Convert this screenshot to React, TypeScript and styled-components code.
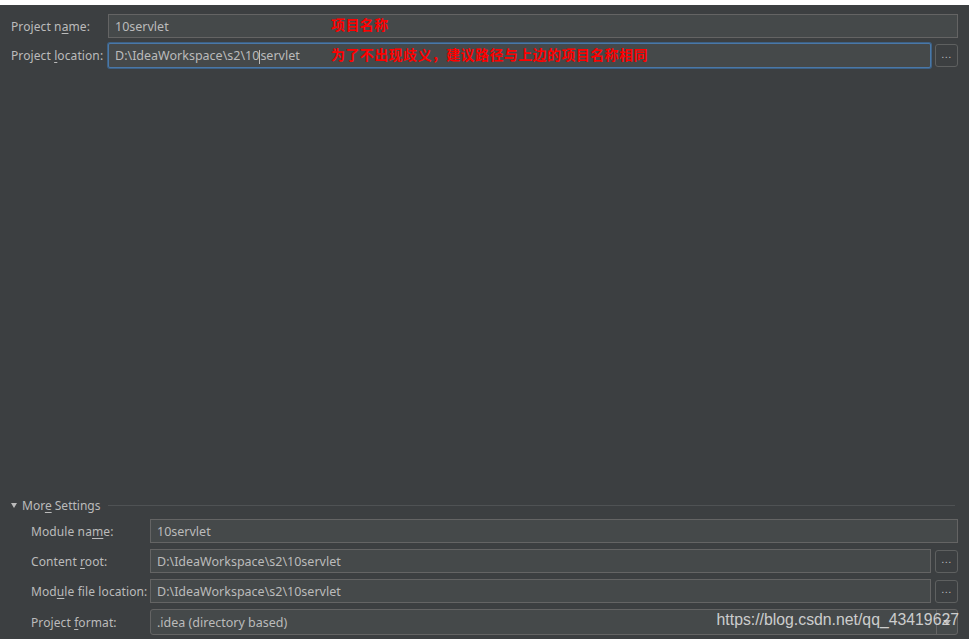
import React from "react";
import styled, { createGlobalStyle } from "styled-components";

const Global = createGlobalStyle`
  html, body { margin: 0; padding: 0; background: #ffffff; }
  body { font-family: "Noto Sans", "Open Sans", "Liberation Sans", sans-serif; }
`;

const Page = styled.div`
  width: 969px;
  height: 639px;
  padding-top: 5px;
  box-sizing: border-box;
  background: #ffffff;
`;

const Panel = styled.div`
  position: relative;
  height: 634px;
  background: #3c3f41;
  display: flex;
  flex-direction: column;
  color: #bbbbbb;
  font-size: 12px;
`;

const TopForm = styled.div`
  padding: 9px 11px 0 11px;
  display: flex;
  flex-direction: column;
  gap: 5px;
`;

const Row = styled.div<{ $labelWidth: number; $height?: number }>`
  display: grid;
  grid-template-columns: ${(p) => p.$labelWidth}px 1fr auto;
  align-items: center;
  height: ${(p) => p.$height ?? 24}px;
`;

const Label = styled.label`
  white-space: nowrap;
  color: #bbbbbb;
  font-size: 12px;
  letter-spacing: 0.1px;
  u { text-decoration-thickness: 1px; text-underline-offset: 2px; }
`;

const Field = styled.div<{ $focused?: boolean; $span?: boolean }>`
  position: relative;
  height: 100%;
  box-sizing: border-box;
  background: #45494a;
  border: 1px solid ${(p) => (p.$focused ? "#4a78a8" : "#646464")};
  box-shadow: ${(p) => (p.$focused ? "0 0 0 1px #3d6185" : "none")};
  border-radius: ${(p) => (p.$focused ? "2px" : "0")};
  display: flex;
  align-items: center;
  padding-left: 6px;
  color: #bbbbbb;
  font-size: 12.5px;
  grid-column: ${(p) => (p.$span ? "2 / 4" : "auto")};
`;

const Caret = styled.span`
  display: inline-block;
  width: 1px;
  height: 14px;
  background: #bbbbbb;
  vertical-align: middle;
`;

const Note = styled.span<{ $left: number }>`
  position: absolute;
  left: ${(p) => p.$left}px;
  top: 50%;
  transform: translateY(-62%);
  color: #ff0000;
  font-family: "Noto Sans CJK SC", sans-serif;
  font-weight: 700;
  font-size: 14px;
  letter-spacing: 0.4px;
  white-space: nowrap;
`;

const Browse = styled.button`
  width: 23px;
  height: 23px;
  margin-left: 4px;
  box-sizing: border-box;
  border: 1px solid #5e6060;
  border-radius: 3px;
  background: #3c3f41;
  color: #bbbbbb;
  font-size: 11px;
  padding: 0 0 4px 0;
  display: flex;
  align-items: center;
  justify-content: center;
  letter-spacing: 0.5px;
`;

const Spacer = styled.div`
  flex: 1;
`;

const Section = styled.div`
  padding: 0 11px 4px 11px;
  display: flex;
  flex-direction: column;
`;

const SectionHead = styled.div`
  display: flex;
  align-items: center;
  height: 14px;
  margin-bottom: 7px;
  font-size: 12px;
  color: #bbbbbb;
  white-space: pre;
  u { text-decoration-thickness: 1px; text-underline-offset: 2px; }
`;

const Arrow = styled.span`
  width: 0;
  height: 0;
  border-left: 3.5px solid transparent;
  border-right: 3.5px solid transparent;
  border-top: 5px solid #bbbbbb;
  margin-right: 5px;
`;

const Rule = styled.div`
  flex: 1;
  height: 1px;
  background: #4f5254;
  margin-left: 8px;
  margin-right: 3px;
`;

const SubForm = styled.div`
  padding-left: 20px;
  display: flex;
  flex-direction: column;
  gap: 6px;
`;

const Combo = styled(Field)`
  border-radius: 3px;
  padding-right: 0;
`;

const ComboArrow = styled.div`
  margin-left: auto;
  width: 20px;
  height: 100%;
  border-left: 1px solid #646464;
  display: flex;
  align-items: center;
  justify-content: center;
`;

const Watermark = styled.div`
  position: absolute;
  right: 10px;
  bottom: 10px;
  font-family: "Liberation Sans", Arial, sans-serif;
  font-size: 15.8px;
  color: rgba(230, 230, 230, 0.85);
  pointer-events: none;
`;

export default function App() {
  return (
    <Page>
      <Global />
      <Panel>
        <TopForm>
          <Row $labelWidth={97}>
            <Label>Project n<u>a</u>me:</Label>
            <Field $span>
              10servlet
              <Note $left={222}>项目名称</Note>
            </Field>
          </Row>
          <Row $labelWidth={97} $height={25}>
            <Label>Project <u>l</u>ocation:</Label>
            <Field $focused>
              <span>
                D:\IdeaWorkspace\s2\10<Caret />servlet
              </span>
              <Note $left={222}>为了不出现歧义，建议路径与上边的项目名称相同</Note>
            </Field>
            <Browse>...</Browse>
          </Row>
        </TopForm>
        <Spacer />
        <Section>
          <SectionHead>
            <Arrow />
            <span>
              Mor<u>e</u> Settings
            </span>
            <Rule />
          </SectionHead>
          <SubForm>
            <Row $labelWidth={119}>
              <Label>Module na<u>m</u>e:</Label>
              <Field $span>10servlet</Field>
            </Row>
            <Row $labelWidth={119}>
              <Label>Content <u>r</u>oot:</Label>
              <Field>D:\IdeaWorkspace\s2\10servlet</Field>
              <Browse>...</Browse>
            </Row>
            <Row $labelWidth={119}>
              <Label>Mod<u>u</u>le file location:</Label>
              <Field>D:\IdeaWorkspace\s2\10servlet</Field>
              <Browse>...</Browse>
            </Row>
            <Row $labelWidth={119} $height={26}>
              <Label>Project <u>f</u>ormat:</Label>
              <Combo $span>
                .idea (directory based)
                <ComboArrow>
                  <svg width="8" height="5" viewBox="0 0 8 5">
                    <path d="M0 0 L8 0 L4 5 Z" fill="#bbbbbb" />
                  </svg>
                </ComboArrow>
              </Combo>
            </Row>
          </SubForm>
        </Section>
        <Watermark>https://blog.csdn.net/qq_43419627</Watermark>
      </Panel>
    </Page>
  );
}
